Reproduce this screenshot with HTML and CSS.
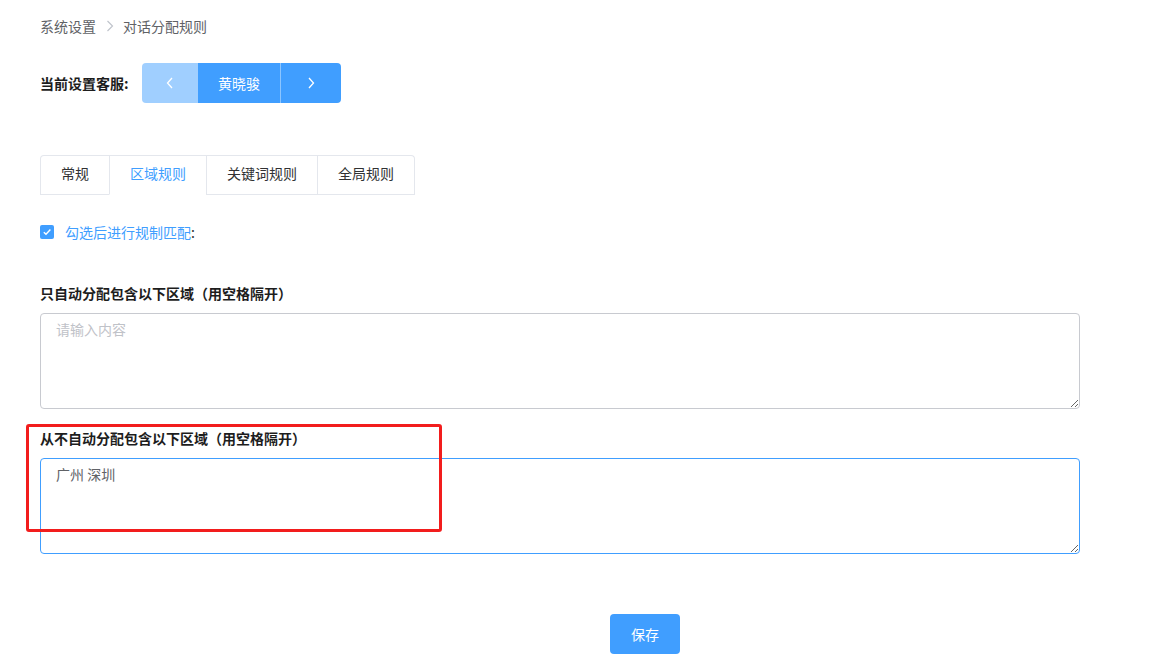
FILE: index.html
```html
<!DOCTYPE html>
<html lang="zh-CN">
<head>
    <meta charset="UTF-8">
    <title>对话分配规则</title>
    <link rel="stylesheet" href="styles.css">
</head>
<body>
<div class="page">
    <div class="breadcrumb">
        <span class="crumb">系统设置</span>
        <svg class="crumb-sep" width="8" height="12" viewBox="0 0 8 12"><path d="M1.5 1 L6.5 6 L1.5 11" fill="none" stroke="#c0c4cc" stroke-width="1.2"/></svg>
        <span class="crumb crumb-current">对话分配规则</span>
    </div>

    <div class="agent-row">
        <span class="agent-label">当前设置客服:</span>
        <div class="switcher">
            <button class="sw-btn sw-prev" disabled>
                <svg width="8" height="12" viewBox="0 0 8 12"><path d="M6 1 L1.5 6 L6 11" fill="none" stroke="#fff" stroke-width="1.3"/></svg>
            </button>
            <button class="sw-btn sw-name">黄晓骏</button>
            <button class="sw-btn sw-next">
                <svg width="8" height="12" viewBox="0 0 8 12"><path d="M2 1 L6.5 6 L2 11" fill="none" stroke="#fff" stroke-width="1.3"/></svg>
            </button>
        </div>
    </div>

    <div class="tabs">
        <div class="tab">常规</div>
        <div class="tab tab-active">区域规则</div>
        <div class="tab">关键词规则</div>
        <div class="tab">全局规则</div>
    </div>

    <div class="check-row">
        <span class="checkbox">
            <svg width="14" height="14" viewBox="0 0 14 14"><path d="M3.8 7.2 L6 9.3 L10.4 4.6" fill="none" stroke="#fff" stroke-width="1.4"/></svg>
        </span>
        <span class="check-text">勾选后进行规制匹配</span><span class="check-colon">:</span>
    </div>

    <div class="field field-first">
        <div class="field-label">只自动分配包含以下区域（用空格隔开）</div>
        <textarea class="area" placeholder="请输入内容"></textarea>
    </div>

    <div class="field">
        <div class="field-label">从不自动分配包含以下区域（用空格隔开）</div>
        <textarea class="area area-focus">广州 深圳</textarea>
    </div>

    <div class="actions">
        <button class="btn-save">保存</button>
    </div>

    <div class="annotation"></div>
</div>
</body>
</html>
```

FILE: styles.css
```css
body {
    margin: 0;
    background: #fff;
    font-family: "Noto Sans CJK SC", "Liberation Sans", sans-serif;
    font-size: 14px;
    color: #303133;
}
.page {
    position: relative;
    padding: 18px 40px 0;
}
.breadcrumb {
    display: flex;
    align-items: center;
    height: 16px;
    line-height: 16px;
}
.crumb { color: #606266; }
.crumb-sep { margin: 0 9px 0 10px; }

.agent-row {
    display: flex;
    align-items: center;
    margin-top: 29px;
}
.agent-label {
    font-weight: bold;
    color: #1d1d1d;
    width: 102px;
}
.switcher {
    display: flex;
    height: 40px;
    border-radius: 4px;
    overflow: hidden;
}
.sw-btn {
    border: none;
    margin: 0;
    padding: 0;
    height: 40px;
    background: #409eff;
    color: #fff;
    font-family: inherit;
    font-size: 14px;
    display: flex;
    align-items: center;
    justify-content: center;
}
.sw-prev { width: 56px; background: #a0cfff; }
.sw-name { width: 83px; border-right: 1px solid #8cc5ff; }
.sw-next { width: 60px; cursor: pointer; }

.tabs {
    display: flex;
    width: max-content;
    margin-top: 52px;
    border: 1px solid #e4e7ed;
    border-bottom: none;
    border-radius: 4px 4px 0 0;
}
.tab {
    height: 38px;
    line-height: 35px;
    padding: 0 20px;
    box-sizing: content-box;
    color: #303133;
    border-left: 1px solid #e4e7ed;
    border-bottom: 1px solid #e4e7ed;
}
.tab:first-child { border-left: none; }
.tab-active {
    color: #409eff;
    border-bottom-color: #fff;
}

.check-row {
    display: flex;
    align-items: center;
    margin-top: 30px;
    height: 14px;
}
.checkbox {
    width: 14px;
    height: 14px;
    border-radius: 2px;
    background: #409eff;
    display: flex;
}
.check-text {
    color: #409eff;
    margin-left: 11px;
}
.check-colon { color: #303133; }

.field { margin-top: 9px; }
.field-first { margin-top: 34px; }
.field-label {
    font-weight: bold;
    color: #1d1d1d;
    height: 40px;
    line-height: 40px;
}
.area {
    display: block;
    box-sizing: border-box;
    width: 1040px;
    height: 96px;
    padding: 4px 15px;
    border: 1px solid #c8cad0;
    border-radius: 4px;
    font-family: inherit;
    font-size: 14px;
    line-height: 22px;
    color: #606266;
    outline: none;
}
.area::placeholder { color: #bfc2c8; }
.area-focus { border-color: #409eff; }

.actions {
    margin-top: 60px;
    padding-left: 570px;
}
.btn-save {
    width: 70px;
    height: 40px;
    border: none;
    border-radius: 4px;
    background: #409eff;
    color: #fff;
    font-family: inherit;
    font-size: 14px;
    cursor: pointer;
}

.annotation {
    position: absolute;
    left: 26px;
    top: 424px;
    width: 410px;
    height: 102px;
    border: 3px solid #f21d1d;
    border-radius: 3px;
}
```
